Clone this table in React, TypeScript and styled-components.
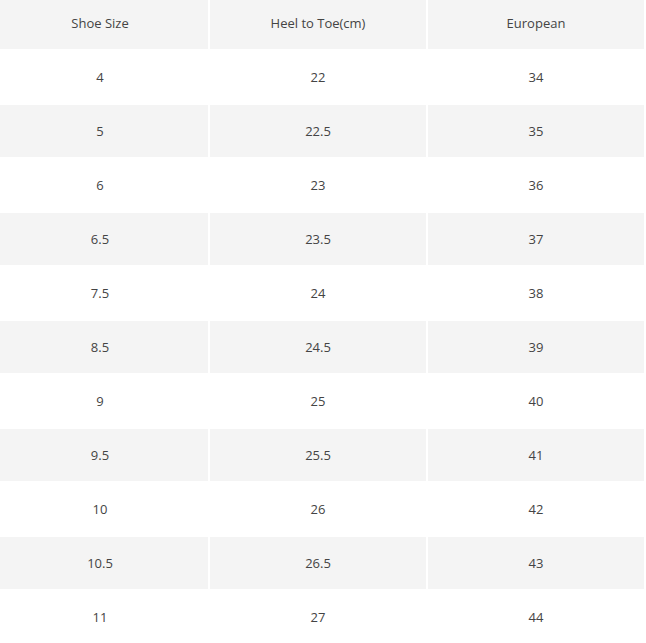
import React from "react";
import styled, { createGlobalStyle } from "styled-components";

const Global = createGlobalStyle`
  html, body { margin: 0; padding: 0; background: #ffffff; }
  body { overflow: hidden; }
`;

const Page = styled.div`
  width: 646px;
  height: 643px;
  overflow: hidden;
  background: #ffffff;
`;

const Table = styled.div`
  display: grid;
  grid-template-columns: repeat(3, 216px);
  grid-auto-rows: 52px;
  gap: 2px;
  margin-top: -3px;
  margin-left: -8px;
`;

const Cell = styled.div<{ $shaded: boolean }>`
  display: flex;
  align-items: center;
  justify-content: center;
  background: ${(p) => (p.$shaded ? "#f4f4f4" : "#ffffff")};
  font-family: "Open Sans", "Liberation Sans", sans-serif;
  font-size: 13px;
  color: #444444;
`;

const header = ["Shoe Size", "Heel to Toe(cm)", "European"];
const rows: string[][] = [
  ["4", "22", "34"],
  ["5", "22.5", "35"],
  ["6", "23", "36"],
  ["6.5", "23.5", "37"],
  ["7.5", "24", "38"],
  ["8.5", "24.5", "39"],
  ["9", "25", "40"],
  ["9.5", "25.5", "41"],
  ["10", "26", "42"],
  ["10.5", "26.5", "43"],
  ["11", "27", "44"],
];

export default function App() {
  const all = [header, ...rows];
  return (
    <Page>
      <Global />
      <Table>
        {all.map((r, i) =>
          r.map((c, j) => (
            <Cell key={`${i}-${j}`} $shaded={i % 2 === 0}>
              {c}
            </Cell>
          ))
        )}
      </Table>
    </Page>
  );
}
